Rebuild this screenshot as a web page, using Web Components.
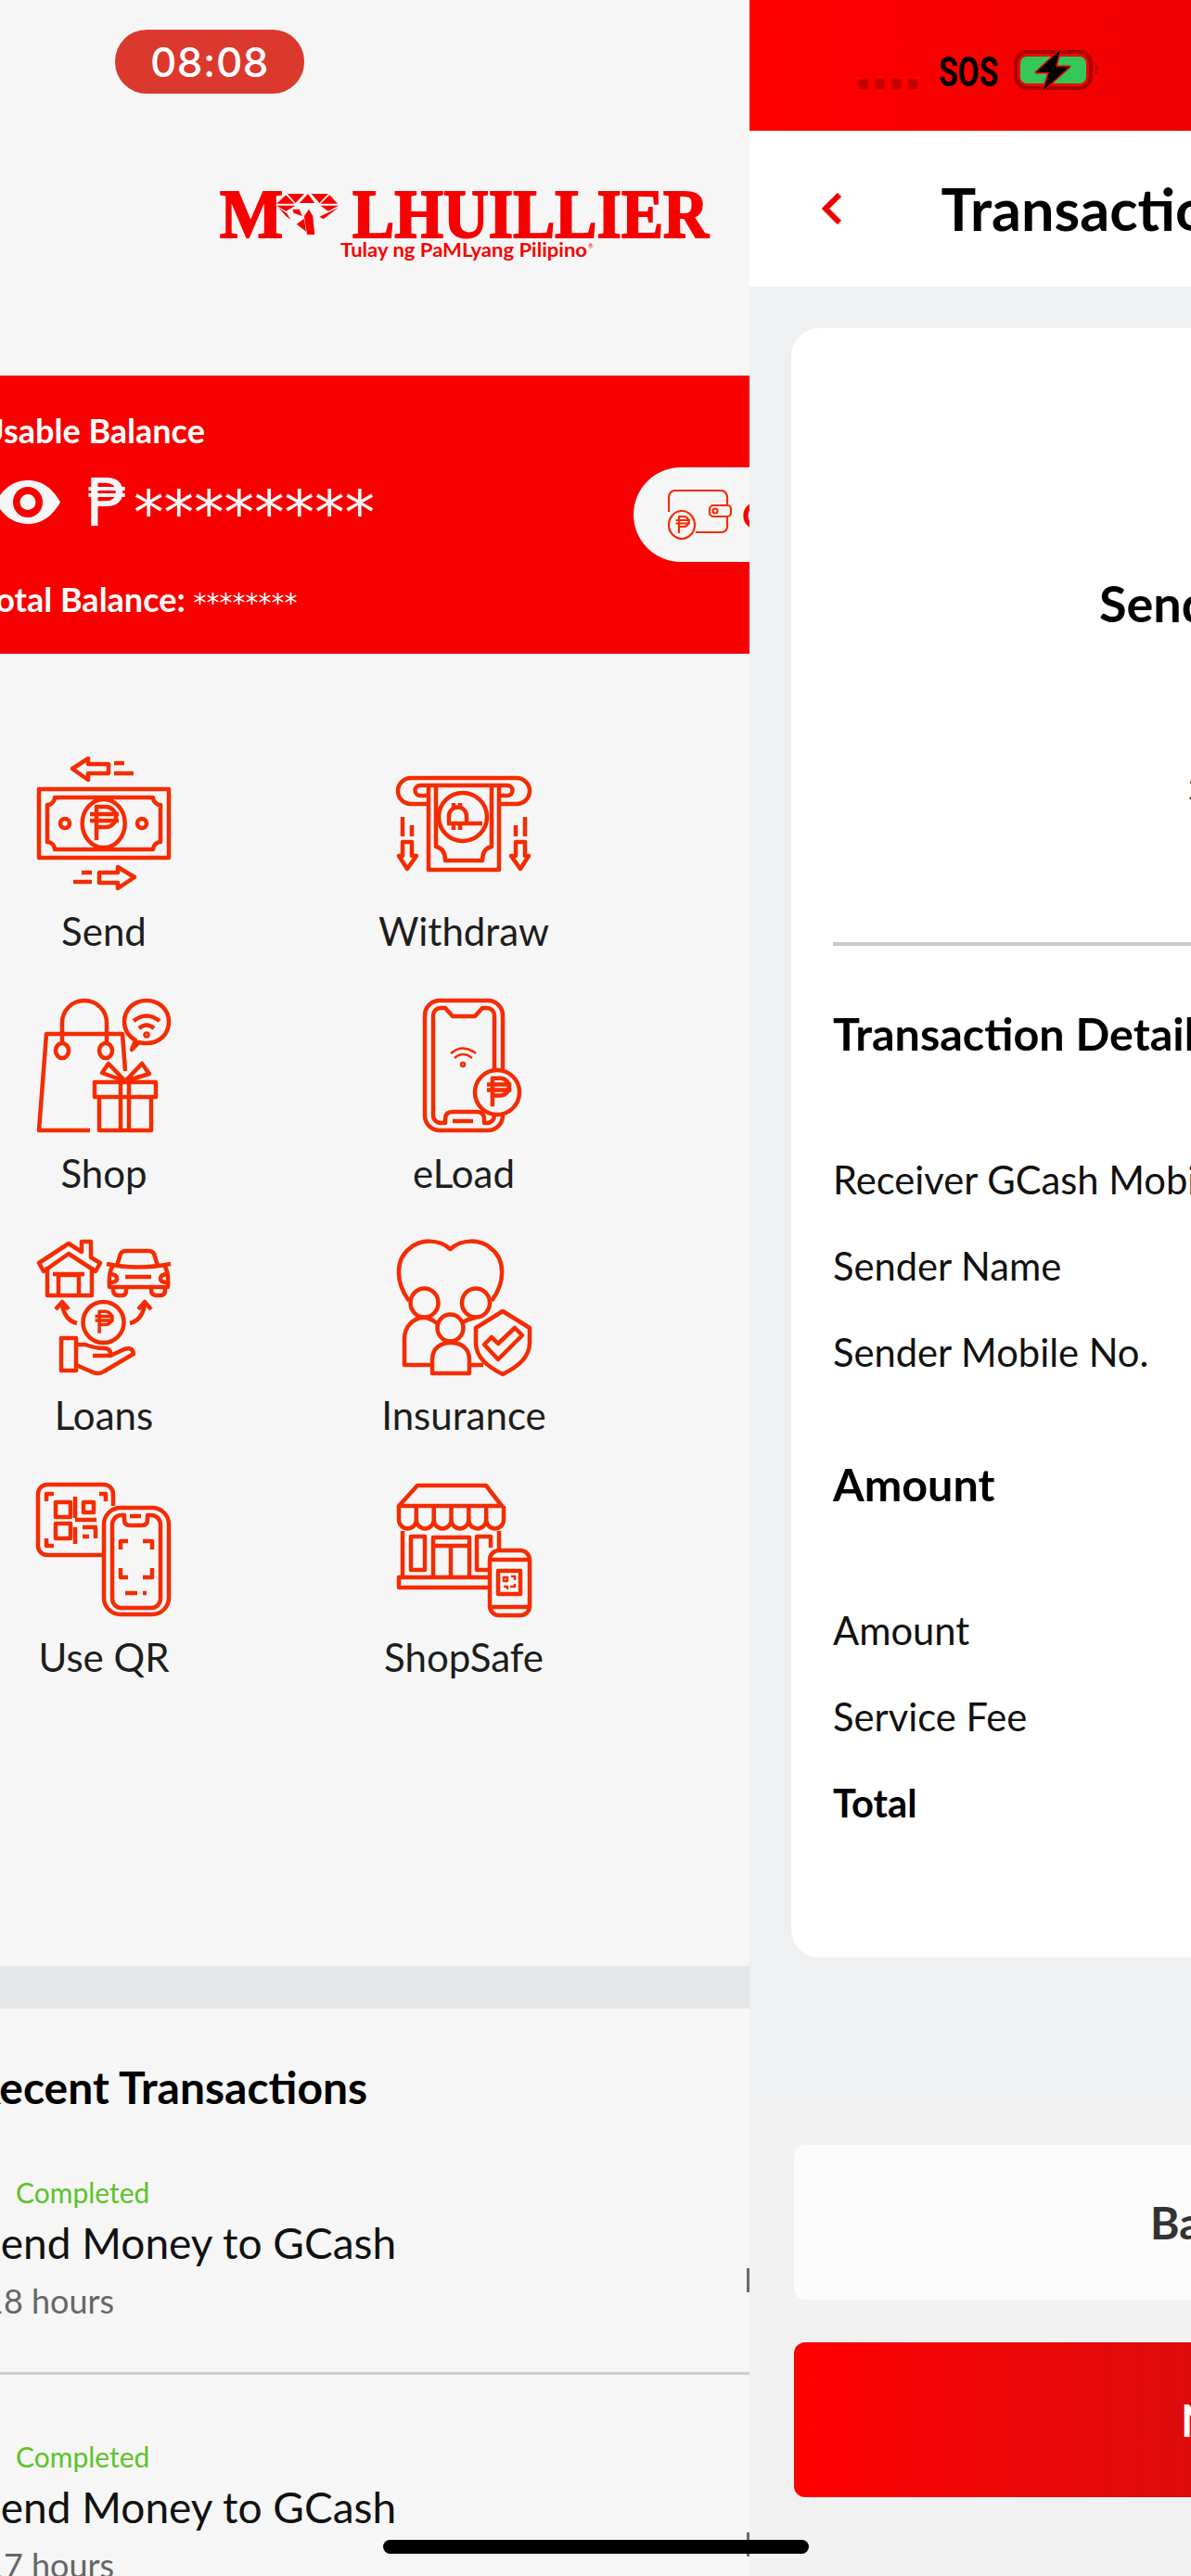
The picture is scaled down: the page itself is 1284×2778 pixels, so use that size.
<!DOCTYPE html>
<html>
<head>
<meta charset="utf-8">
<style>
  html, body { margin: 0; padding: 0; background: #f6f6f6; }
  body { font-family: Lato, "Open Sans", sans-serif; }
</style>
</head>
<body>
<ml-app>
  <ml-home slot="home">
    <ml-logo-bar slot="top"></ml-logo-bar>
    <ml-balance slot="top"></ml-balance>
    <ml-menu slot="top">
      <ml-menu-item icon="send">Send</ml-menu-item>
      <ml-menu-item icon="withdraw">Withdraw</ml-menu-item>
      <ml-menu-item icon="shop">Shop</ml-menu-item>
      <ml-menu-item icon="eload">eLoad</ml-menu-item>
      <ml-menu-item icon="loans">Loans</ml-menu-item>
      <ml-menu-item icon="insurance">Insurance</ml-menu-item>
      <ml-menu-item icon="qr">Use QR</ml-menu-item>
      <ml-menu-item icon="shopsafe">ShopSafe</ml-menu-item>
    </ml-menu>
    <ml-recent slot="top">
      <ml-txn title-text="Send Money to GCash" when="18 hours"></ml-txn>
      <ml-txn title-text="Send Money to GCash" when="17 hours"></ml-txn>
    </ml-recent>
  </ml-home>
  <ml-detail slot="detail"></ml-detail>
</ml-app>

<script>
const INK = "#f42c00";
const BG = "#f6f6f6";

// peso mark used inside the line icons
const peso = (x, y, s = 1, w = 4.500) => `
  <g transform="translate(${x} ${y}) scale(${s})" stroke-width="${w / s}">
    <path d="M-6 18V-18H4A11 11 0 0 1 4 4H-6"/>
    <path d="M-13 -10H18M-13 -3H18"/>
  </g>`;

const ICONS = {
  send: `
    <rect x="2" y="35" width="140" height="74"/>
    <path d="M19 44H125A8 8 0 0 0 133 52V92A8 8 0 0 0 125 100H19A8 8 0 0 0 11 92V52A8 8 0 0 0 19 44Z"/>
    <ellipse cx="71.700" cy="72" rx="23" ry="26" fill="${BG}"/>
    ${peso(70, 72)}
    <circle cx="30" cy="72" r="5"/><circle cx="113" cy="72" r="5"/>
    <path d="M38 13L55 2V8H77V18H55V25Z"/>
    <path d="M83 7H94M83 18H104"/>
    <path d="M105 130L87 119V125H67V136H87V142Z"/>
    <path d="M48 125H59M39 135H59"/>`,
  withdraw: `
    <path d="M34 51H15A14 14 0 0 1 15 23H129A14 14 0 0 1 129 51H110"/>
    <path d="M34 42H25a5.500 5.500 0 0 1 0-11H119a5.500 5.500 0 0 1 0 11H110"/>
    <path d="M34 33V122H110V33"/>
    <path d="M42 33V97Q52 99 52 112H92Q92 99 102 97V33"/>
    <circle cx="71" cy="65" r="26" fill="${BG}"/>
    <path d="M54 72H92M56 72V64A9.500 9.500 0 0 1 75 64V72M61 50V55M68 50V55M61 72V79M68 72V79"/>
    <path d="M6 65V86M16 74V86M6 92H16V107H21L11 121L2 107H6Z"/>
    <path d="M138 65V86M128 74V86M128 92H138V107H142L133 121L123 107H128Z"/>`,
  shop: `
    <path d="M57 142H2L10 38H92L95 78"/>
    <path d="M27 50V26A24 24 0 0 1 75 26V50"/>
    <ellipse cx="27" cy="56" rx="7" ry="8"/><ellipse cx="74" cy="56" rx="7" ry="8"/>
    <path d="M102 55L106 45C98 40 94 33 94 25C94 11 105 2 118 2C131 2 142 11 142 25C142 39 131 48 118 48C115 48 112 48 110 47Z"/>
    <path d="M104 24Q118 13 132 24M110 32Q118 25 126 32"/>
    <circle cx="118" cy="39" r="1.500"/>
    <rect x="62" y="90" width="66" height="16"/>
    <path d="M67 106V142H123V106M90 90V142M99 90V142"/>
    <path d="M95 89L70 80L77 70ZM95 89L121 81L113 70Z"/>`,
  eload: `
    <rect x="30" y="2" width="84" height="140" rx="16"/>
    <path d="M47 10H52L60 19H84L92 10H97A8 8 0 0 1 105 18V126A8 8 0 0 1 97 134H94V130Q94 122 86 122H60Q52 122 52 130V134H47A8 8 0 0 1 39 126V18A8 8 0 0 1 47 10Z"/>
    <path d="M60 132H82"/>
    <path d="M58 59Q71 48 85 59M62 64Q71 56 81 64" stroke-width="2.500"/>
    <circle cx="71" cy="71" r="2" stroke-width="2.500"/>
    <ellipse cx="108" cy="101" rx="24" ry="24" fill="${BG}"/>
    ${peso(108, 101, .85)}`,
  loans: `
    <path d="M2 24L34 3L48 12V1H58V18L68 24L63 33L34 14L7 33Z"/>
    <path d="M11 28V59H59V28M23 59V37H45V59M17 36H51"/>
    <path d="M86 27L90 14Q92 11 96 11H120Q124 11 126 14L130 27"/>
    <path d="M75 25Q108 32 144 25"/>
    <path d="M82 27Q77 32 78 50H141Q142 32 137 27"/>
    <path d="M82 50V53Q82 59 88 59H92Q96 59 96 53V50M123 50V53Q123 59 129 59H133Q138 59 138 53V50"/>
    <path d="M78 36Q86 36 86 41Q86 45 78 45M141 36Q133 36 133 41Q133 45 141 45M95 39H123"/>
    <ellipse cx="71.500" cy="88" rx="22" ry="22"/>
    ${peso(71, 88, .65, 3.500)}
    <path d="M43 89Q30 86 27 69M20 74L27 66L34 74M100 89Q113 86 116 69M109 74L116 66L123 74"/>
    <rect x="26" y="105" width="16" height="35"/>
    <path d="M42 112H52Q62 116 72 116Q80 116 79 124H60M79 124L94 117Q103 114 104 122L72 141Q66 145 58 141L42 134"/>`,
  insurance: `
    <path d="M13 65C-2 45 -2 20 14 8C26 -2 45 -2 57.500 9C70 -2 89 -2 101 8C117 20 117 45 102 65"/>
    <ellipse cx="29.500" cy="67" rx="15" ry="15.500"/>
    <ellipse cx="85" cy="67" rx="15" ry="15.500"/>
    <path d="M38 134H8V106C8 92 18 83 29 83C34 83 38 85 43 89"/>
    <path d="M71 88C75 85 79 84 85 83M78 134H93"/>
    <ellipse cx="57.500" cy="94" rx="14" ry="14.500"/>
    <path d="M38 143V128C38 116 47 110 58 110C69 110 78 116 78 128V143Z"/>
    <path d="M114 76L143 94V110C143 126 130 136 114 144C98 136 85 126 85 110V94Z" fill="${BG}"/>
    <path d="M94 112L102 104L109 111L127 94L135 102L109 128Z"/>`,
  qr: `
    <path d="M70 78H11A10 10 0 0 1 1 68V12A10 10 0 0 1 11 2H72A10 10 0 0 1 82 12V25"/>
    <path d="M18 12H10V20M67 12H74V20M10 60V68H18"/>
    <rect x="20" y="21" width="16" height="16"/>
    <rect x="50" y="21" width="11" height="11"/>
    <path d="M41 15V38M41 40H64"/>
    <rect x="20" y="44" width="16" height="16"/>
    <path d="M41 48V66M49 48H63V60M49 58H56"/>
    <rect x="72" y="27" width="70" height="115" rx="18"/>
    <path d="M91 35H94V40Q94 46 100 46H113Q119 46 119 40V35H123A10 10 0 0 1 133 45V125A10 10 0 0 1 123 135H91A10 10 0 0 1 81 125V45A10 10 0 0 1 91 35Z"/>
    <path d="M100 36H112M98 63H90V72M114 63H124V72M90 92V102H98M124 92V102H114M95 119H108M114 119H118"/>`,
  shopsafe: `
    <path d="M2 25L22 3H96L113 25Z"/>
    <path d="M2 25V40A9.400 9.400 0 0 0 20.800 40A9.400 9.400 0 0 0 39.700 40A9.400 9.400 0 0 0 58.500 40A9.400 9.400 0 0 0 77.300 40A9.400 9.400 0 0 0 96.200 40A9.400 9.400 0 0 0 115 40V25"/>
    <path d="M20.800 25V40M39.700 25V40M58.500 25V40M77.300 25V40M96.200 25V40"/>
    <path d="M6 52V102M110 52V72"/>
    <rect x="15" y="58" width="15" height="36"/>
    <path d="M39 102V59H78V102M39 68H78M58 68V102"/>
    <path d="M101 70V58H86V94H98"/>
    <path d="M98 102H2V113H98"/>
    <rect x="100" y="73" width="43" height="70" rx="10" fill="${BG}"/>
    <path d="M100 83H143M100 134H143"/>
    <rect x="109" y="95" width="24" height="25"/>
    <path d="M115 102h4v4h-4zM123 101h4v4M115 112h4v3M122 112h5v-3" stroke-width="2.500"/>`,
};

const define = (name, html, init) => {
  const tpl = document.createElement("template");
  tpl.innerHTML = html;
  customElements.define(name, class extends HTMLElement {
    constructor() {
      super();
      this.attachShadow({ mode: "open" });
      this.shadowRoot.appendChild(tpl.content.cloneNode(true));
    }
    connectedCallback() {
      if (init) init(this, this.shadowRoot);
    }
  });
};

define("ml-app", `
  <style>
    :host { display: flex; width: 1284px; height: 2778px; overflow: hidden; position: relative; }
    .bar {
      position: absolute; left: 413px; top: 2739px; width: 459px; height: 15px;
      border-radius: 8px; background: #000;
    }
  </style>
  <slot name="home"></slot>
  <slot name="detail"></slot>
  <div class="bar"></div>
`);

define("ml-home", `
  <style>
    :host { display: block; width: 808px; height: 2778px; flex: none; overflow: hidden; background: ${BG}; position: relative; }
    /* screen is mid back-swipe, so its content sits 82px off the left edge */
    .shift { width: 890px; margin-left: -82px; }
    .tick { position: absolute; left: 805px; width: 3px; height: 26px; background: #6a6a6a; }
  </style>
  <div class="shift"><slot name="top"></slot></div>
  <div class="tick" style="top:2446px"></div>
  <div class="tick" style="top:2731px"></div>
`);

define("ml-logo-bar", `
  <style>
    :host { display: flow-root; height: 344px; padding-left: 82px; box-sizing: border-box; }
    .pill {
      margin: 32px 0 0 124px; width: 204px; height: 69px; border-radius: 34px; background: #db382e;
      display: flex; align-items: center; justify-content: center;
      color: #fff; font: 500 44px Inter, sans-serif; letter-spacing: .5px;
    }
    svg { display: block; margin: 106px 0 0 237px; overflow: visible; }
    text { fill: #f90000; }
    .big { font: 700 74px "Liberation Serif", serif; stroke: #f90000; stroke-width: 2px; }
    .tag { font: 700 21px Lato, sans-serif; }
    .reg { font: 400 7px Lato, sans-serif; }
  </style>
  <div class="pill">08:08</div>
  <svg width="527" height="72" viewBox="0 0 527 72">
    <text class="big" x="0" y="49" textLength="68" lengthAdjust="spacingAndGlyphs">M</text>
    <g fill="#f90000" transform="translate(-244.800 -207.300) scale(.5165 .3333)">
      <path d="M615 628H650L632 658ZM665 628H700L682 658ZM658 628L640 658H672ZM612 632L592 660H630ZM703 632L720 660H684Z"/>
      <path d="M592 666H632L612 684ZM684 666H722L700 684ZM596 672L614 692L622 712L612 700ZM722 672L690 710L682 702ZM626 678H640L646 700L628 690ZM660 678L668 700L672 760L656 760L650 700ZM634 726L650 708L654 750Z"/>
    </g>
    <text class="big" x="143" y="49" textLength="384" lengthAdjust="spacingAndGlyphs">LHUILLIER</text>
    <text class="tag" x="130" y="70" textLength="266" lengthAdjust="spacingAndGlyphs">Tulay ng PaMLyang Pilipino</text>
    <text class="reg" x="397" y="61">®</text>
  </svg>
`);

define("ml-balance", `
  <style>
    :host {
      display: flex; align-items: center; box-sizing: border-box;
      height: 300px; margin: 61px 0 60px; padding-left: 60px;
      background: #f90000; color: #fff;
    }
    .left { width: 705px; flex: none; }
    .usable { font: 700 36px/40px Lato, sans-serif; padding-bottom: 22px; }
    .main { display: flex; align-items: center; height: 72px; color: ${BG}; }
    .main svg { flex: none; margin: 0 28px 0 17px; }
    .peso { font: 400 72px/72px "DejaVu Sans", sans-serif; width: 51px; }
    .stars { font: 400 65px/72px "DejaVu Sans", sans-serif; white-space: nowrap; position: relative; top: 12px; }
    .total { font: 700 36px/40px Lato, sans-serif; padding-top: 48px; white-space: nowrap; }
    .total span { font: 400 28px "DejaVu Sans", sans-serif; }
    .wallet {
      display: flex; align-items: center; gap: 11px; flex: none;
      width: 300px; height: 102px; border-radius: 51px; background: ${BG};
      padding-left: 37px; box-sizing: border-box;
      color: #f90000; font: 700 38px Lato, sans-serif;
    }
    .wallet svg { flex: none; }
  </style>
  <div class="left">
    <div class="usable">Usable Balance</div>
    <div class="main">
      <svg width="70" height="47" viewBox="0 0 70 47">
        <path d="M0 23.500C10 6 22 0 35 0S60 6 70 23.500C60 41 48 47 35 47S10 41 0 23.500Z" fill="currentColor"/>
        <ellipse cx="35" cy="23.500" rx="16" ry="16.500" fill="#f90000"/>
        <ellipse cx="35" cy="23.500" rx="8.500" ry="8.500" fill="currentColor"/>
      </svg>
      <div class="peso">₱</div><div class="stars">********</div>
    </div>
    <div class="total">Total Balance: <span>********</span></div>
  </div>
  <div class="wallet">
    <svg width="69" height="54" viewBox="0 0 69 54" fill="none" stroke="${INK}" stroke-width="2.200" stroke-linejoin="round">
      <path d="M1 24V8A7 7 0 0 1 8 1H57A7 7 0 0 1 64 8V17M64 29V40A6 6 0 0 1 58 46H30"/>
      <rect x="45" y="17" width="23" height="12" rx="4"/>
      <circle cx="51" cy="23" r="2.500"/>
      <ellipse cx="15" cy="38" rx="14" ry="15" fill="${BG}"/>
      ${peso(15, 38, .5, 2.200)}
    </svg>
    <span>C</span>
  </div>
`);

define("ml-menu", `
  <style>
    :host {
      display: grid; grid-template-columns: 388px 388px; row-gap: 49px;
      height: 1355px; box-sizing: border-box; padding-top: 51px; align-content: start;
    }
  </style>
  <slot></slot>
`);

define("ml-menu-item", `
  <style>
    :host { display: flex; flex-direction: column; align-items: center; color: #1d1d1d; }
    svg { display: block; overflow: visible; fill: none; stroke: ${INK}; stroke-width: 4.500; stroke-linejoin: round; }
    .label { margin-top: 20px; font: 400 42px/48px Lato, sans-serif; white-space: nowrap; }
  </style>
  <svg width="144" height="144" viewBox="0 0 144 144"></svg>
  <div class="label"><slot></slot></div>
`, (el, root) => {
  root.querySelector("svg").innerHTML = ICONS[el.getAttribute("icon")] || "";
});

define("ml-recent", `
  <style>
    :host { display: block; border-top: 46px solid #e6e7e9; padding: 60px 0 0 60px; }
    h2 { margin: 0 0 0 -8px; font: 700 48px/50px Lato, sans-serif; color: #000; white-space: nowrap; }
  </style>
  <h2>Recent Transactions</h2>
  <slot></slot>
`);

define("ml-txn", `
  <style>
    :host { display: block; height: 285px; box-sizing: border-box; padding-top: 71px; margin-left: -60px; padding-left: 60px; border-bottom: 3px solid #ccc; }
    .status { margin-left: 39px; font: 400 30px/34px Lato, sans-serif; color: #5cc329; }
    .name { margin: 11px 0 0 -2px; font: 400 46px/54px Lato, sans-serif; color: #111; white-space: nowrap; }
    .when { margin: 15px 0 0 5px; font: 400 36px/41px Lato, sans-serif; color: #666; }
  </style>
  <div class="status">Completed</div>
  <div class="name"></div>
  <div class="when"></div>
`, (el, root) => {
  root.querySelector(".name").textContent = el.getAttribute("title-text");
  root.querySelector(".when").textContent = el.getAttribute("when");
});

define("ml-row", `
  <style>
    :host { display: block; height: 93px; font: 400 41.700px/48px Lato, sans-serif; color: #111; white-space: nowrap; }
    :host([strong]) { font-weight: 700; color: #000; }
  </style>
  <slot></slot>
`);

define("ml-heading", `
  <style>
    :host { display: block; font: 700 48.500px/55px Lato, sans-serif; color: #000; white-space: nowrap; }
  </style>
  <slot></slot>
`);

define("ml-detail", `
  <style>
    :host { display: block; width: 476px; height: 2778px; flex: none; overflow: hidden; background: #f1f1f1; box-shadow: 0 0 30px rgba(0,0,0,.04); }
    .status {
      display: flex; align-items: flex-start; height: 141px; box-sizing: border-box; padding: 54px 0 0 117px;
      background: linear-gradient(90deg, #ff0000, #ef0000);
    }
    .dots { display: flex; gap: 7px; margin-top: 31px; }
    .dots i { width: 11px; height: 11px; border-radius: 3px; background: #c60000; }
    .sos {
      width: 62px; margin: 4px 0 0 22px; font: 700 44px/40px Roboto, sans-serif; color: #000;
      transform: scaleX(.76); transform-origin: left;
    }
    .status svg { margin-left: 19px; overflow: visible; }
    .head {
      display: flex; align-items: center; height: 168px; background: #fff; padding-left: 78px; box-sizing: border-box;
    }
    .head svg { flex: none; }
    .head h1 { margin: 0 0 0 107.500px; font: 700 63px/72px Lato, sans-serif; color: #000; white-space: nowrap; }
    .main { height: 1955px; box-sizing: border-box; padding: 45px 0 0 45px; background: #eff0f2; }
    .card {
      width: 1194px; height: 1757px; box-sizing: border-box; padding: 266px 0 0 45px;
      background: #fff; border-radius: 30px;
    }
    .send { margin-left: 287px; font: 700 54px/61px Lato, sans-serif; color: #000; white-space: nowrap; }
    .date { margin: 150px 0 0 383px; font: 400 32px/38px Lato, sans-serif; color: #333; }
    .rule { margin-top: 147px; width: 1100px; height: 4px; background: #c9c9c9; }
    .sec1 { margin-top: 67px; }
    .rows1 { margin-top: 106px; }
    .sec2 { margin-top: 46px; }
    .rows2 { margin-top: 106px; }
    .foot { padding: 49px 0 0 48px; display: flex; flex-direction: column; gap: 46px; }
    .btn {
      width: 1190px; height: 167px; box-sizing: border-box; border-radius: 12px;
      display: flex; align-items: center; white-space: nowrap;
      font: 700 48px/56px Lato, sans-serif;
    }
    .back { background: #fbfbfb; color: #333; padding-left: 384px; }
    .next { background: linear-gradient(90deg, #ff0000 0, #dd0c0c 428px); color: #fff; padding-left: 417px; }
  </style>
  <div class="status">
    <div class="dots"><i></i><i></i><i></i><i></i></div>
    <div class="sos">SOS</div>
    <svg width="93" height="43" viewBox="0 0 93 43">
      <rect x="2" y="2" width="81" height="39" rx="13" fill="none" stroke="#a80000" stroke-width="4"/>
      <rect x="7" y="7" width="71" height="29" rx="7" fill="#34c759"/>
      <path d="M88 16Q93 21 88 27Z" fill="#a80000"/>
      <path d="M50 0L24 24H38L32 43L60 18H45Z" fill="#000" stroke="#f00000" stroke-width="3" paint-order="stroke" stroke-linejoin="round"/>
    </svg>
  </div>
  <div class="head">
    <svg width="21" height="34" viewBox="0 0 21 34" fill="none" stroke="#f00000" stroke-width="6"><path d="M19 2L4 17L19 32"/></svg>
    <h1>Transaction</h1>
  </div>
  <div class="main">
    <div class="card">
      <div class="send">Send Money</div>
      <div class="date">2</div>
      <div class="rule"></div>
      <ml-heading class="sec1">Transaction Details</ml-heading>
      <div class="rows1">
        <ml-row>Receiver GCash Mobile No.</ml-row>
        <ml-row>Sender Name</ml-row>
        <ml-row>Sender Mobile No.</ml-row>
      </div>
      <ml-heading class="sec2">Amount</ml-heading>
      <div class="rows2">
        <ml-row>Amount</ml-row>
        <ml-row>Service Fee</ml-row>
        <ml-row strong>Total</ml-row>
      </div>
    </div>
  </div>
  <div class="foot">
    <div class="btn back">Back</div>
    <div class="btn next">Next</div>
  </div>
`);
</script>
</body>
</html>
